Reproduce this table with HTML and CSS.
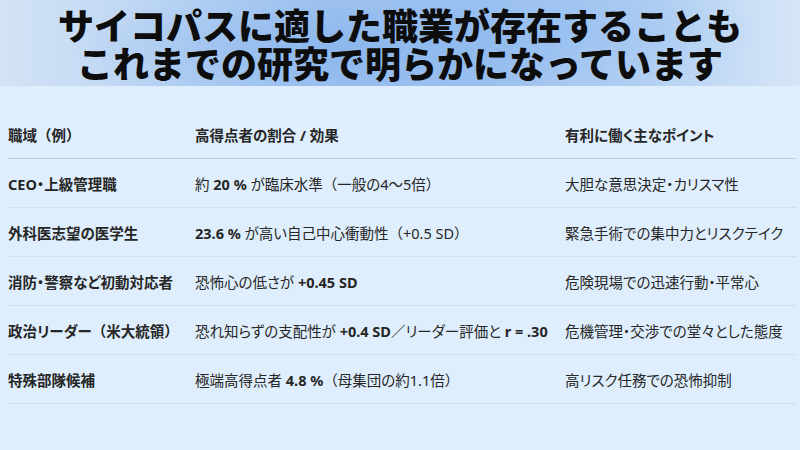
FILE: index.html
```html
<!DOCTYPE html>
<html lang="ja">
<head>
<meta charset="utf-8">
<link rel="stylesheet" href="styles.css">
</head>
<body>
<header class="band">
  <h1 class="title"><span class="line">サイコパスに適した職業が存在することも</span><span class="line">これまでの研究で明らかになっています</span></h1>
</header>
<main class="content">
  <table class="jobs">
    <colgroup>
      <col class="c1"><col class="c2"><col class="c3">
    </colgroup>
    <thead>
      <tr><th>職域<span class="fw">（</span>例<span class="fw">）</span></th><th>高得点者の割合 / 効果</th><th>有利に働く主なポイント</th></tr>
    </thead>
    <tbody>
      <tr><td class="role">CEO・上級管理職</td><td>約 <b>20 %</b> が臨床水準<span class="fw">（</span>一般の4〜5倍<span class="fw">）</span></td><td>大胆な意思決定・カリスマ性</td></tr>
      <tr><td class="role">外科医志望の医学生</td><td><b>23.6 %</b> が高い自己中心衝動性<span class="fw">（</span>+0.5 SD<span class="fw">）</span></td><td>緊急手術での集中力とリスクテイク</td></tr>
      <tr><td class="role">消防・警察など初動対応者</td><td>恐怖心の低さが <b>+0.45 SD</b></td><td>危険現場での迅速行動・平常心</td></tr>
      <tr><td class="role">政治リーダー<span class="fw">（</span>米大統領<span class="fw">）</span></td><td>恐れ知らずの支配性が <b>+0.4 SD</b><span class="fw">／</span>リーダー評価と <b>r = .30</b></td><td>危機管理・交渉での堂々とした態度</td></tr>
      <tr><td class="role">特殊部隊候補</td><td>極端高得点者 <b>4.8 %</b><span class="fw">（</span>母集団の約1.1倍<span class="fw">）</span></td><td>高リスク任務での恐怖抑制</td></tr>
    </tbody>
  </table>
</main>
</body>
</html>
```

FILE: styles.css
```css
html, body {
  margin: 0;
  padding: 0;
}
body {
  width: 800px;
  height: 450px;
  overflow: hidden;
  background: #dfeefc;
  font-family: "Noto Sans", "Noto Sans CJK JP", sans-serif;
  color: #262626;
}
.band {
  height: 86px;
  box-sizing: border-box;
  padding-top: 5px;
  background:
    radial-gradient(ellipse 260px 70px at 330px 50px, rgba(120,170,235,0.55), rgba(120,170,235,0) 100%),
    radial-gradient(ellipse 200px 60px at 560px 30px, rgba(140,185,240,0.5), rgba(140,185,240,0) 100%),
    linear-gradient(90deg, #d3e3f6 0%, #bcd5f3 20%, #a4c6f0 40%, #9fc3ef 60%, #b2cff2 80%, #d6e6f8 100%);
}
.title {
  margin: 0;
  display: flex;
  flex-direction: column;
  align-items: center;
  font-family: "Noto Sans CJK JP", sans-serif;
  font-weight: 900;
  font-size: 36px;
  color: #0d0d0d;
}
.line {
  display: block;
  height: 38px;
  line-height: 38px;
  white-space: nowrap;
}
.content {
  padding: 24px 4px 0 8px;
}
.jobs {
  width: 788px;
  table-layout: fixed;
  border-collapse: collapse;
  font-size: 14.5px;
  font-feature-settings: "palt" 1;
}
.fw {
  font-feature-settings: normal;
}
.c1 { width: 187px; }
.c2 { width: 370px; }
.c3 { width: 231px; }
.jobs th {
  height: 48px;
  text-align: left;
  font-weight: 700;
  padding: 0;
  border-bottom: 1.5px solid #c3cedb;
  white-space: nowrap;
}
.jobs td {
  height: 48px;
  padding: 0;
  border-bottom: 1px solid #d2deec;
  white-space: nowrap;
}
.jobs td.role {
  font-weight: 700;
}
.jobs b {
  font-weight: 700;
}
```
